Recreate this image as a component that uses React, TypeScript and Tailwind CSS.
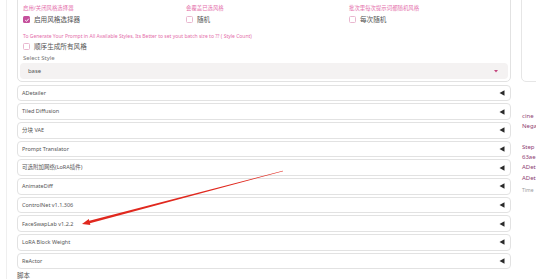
import React from "react";

const FONT = { fontFamily: '"Noto Sans", "Noto Sans CJK SC", sans-serif' };

function Check({ checked }: { checked?: boolean }) {
  if (checked) {
    return (
      <div className="w-[7px] h-[7px] rounded-[1.5px] bg-[#c5509c] flex items-center justify-center shrink-0">
        <svg width="6" height="6" viewBox="0 0 10 10">
          <path d="M2 5.2 L4.2 7.3 L8 2.8" stroke="white" strokeWidth="1.6" fill="none" />
        </svg>
      </div>
    );
  }
  return <div className="w-[7px] h-[7px] rounded-[1.5px] border border-[#e9b7cf] bg-white shrink-0" />;
}

function Opt({ label, text, checked }: { label: string; text: string; checked?: boolean }) {
  return (
    <div className="flex flex-col">
      <div className="h-[8px] leading-[8px] text-[5.4px] text-[#e46eaa] whitespace-nowrap">{label}</div>
      <div className="mt-[2px] h-[11px] flex items-center gap-[4px]">
        <Check checked={checked} />
        <span className="text-[6.6px] text-[#555] whitespace-nowrap">{text}</span>
      </div>
    </div>
  );
}

const rows = [
  "ADetailer",
  "Tiled Diffusion",
  "分块 VAE",
  "Prompt Translator",
  "可选附加网络(LoRA插件)",
  "AnimateDiff",
  "ControlNet v1.1.306",
  "FaceSwapLab v1.2.2",
  "LoRA Block Weight",
  "ReActor",
];

export default function App() {
  return (
    <div className="w-[536px] h-[279px] overflow-hidden bg-white relative flex" style={FONT}>
      <div className="w-[513px] shrink-0 pl-[6px]">
        <div className="h-[300px] border-l border-[#efefef] pl-[10px] flex flex-col">
          <div className="mt-[-10px] w-[494px] border border-[#e2e2e2] rounded-[5px] px-[2px] pt-[13px] pb-[2px] flex flex-col">
            <div className="pl-[3px] grid grid-cols-[163px_163px_1fr]">
              <Opt label="启用/关闭风格选择器" text="启用风格选择器" checked />
              <Opt label="会覆盖已选风格" text="随机" />
              <Opt label="批次里每次提示词都随机风格" text="每次随机" />
            </div>
            <div className="pl-[3px] mt-[7px] h-[8px] leading-[8px] text-[5px] text-[#e46eaa] whitespace-nowrap">
              To Generate Your Prompt in All Available Styles, Its Better to set yout batch size to ?? ( Style Count)
            </div>
            <div className="pl-[3px] mt-[1px] h-[11px] flex items-center gap-[4px]">
              <Check />
              <span className="text-[6.6px] text-[#555]">顺序生成所有风格</span>
            </div>
            <div className="pl-[3px] mt-[2px] h-[8px] leading-[8px] text-[6px] text-[#777]">Select Style</div>
            <div className="mt-[1px] h-[16px] rounded-[4px] bg-[#f4f2f2] flex items-center justify-between pl-[8px] pr-[10px]">
              <span className="text-[5.9px] text-[#555]">base</span>
              <svg width="4" height="3" viewBox="0 0 4 3">
                <path d="M0 0 L4 0 L2 2.5 Z" fill="#c4467e" />
              </svg>
            </div>
          </div>
          <div className="mt-[2.5px] w-[494px] flex flex-col gap-[2px]">
            {rows.map((r) => (
              <div
                key={r}
                className="h-[16.7px] border border-[#e2e2e2] rounded-[4px] flex items-center justify-between pl-[4px] pr-[5px]"
              >
                <span className="text-[5.5px] text-[#555] whitespace-nowrap">{r}</span>
                <svg width="6" height="6" viewBox="0 0 6 6">
                  <path d="M0.5 3 L5.5 0.3 L5.5 5.7 Z" fill="#2a2a2a" />
                </svg>
              </div>
            ))}
          </div>
          <div className="mt-[2.5px] h-[8px] leading-[8px] text-[6.4px] text-[#555]">脚本</div>
        </div>
      </div>
      <div className="flex-1 flex flex-col pl-[8px] overflow-hidden">
        <div className="mt-[-10px] h-[92px] w-[60px] shrink-0 border border-[#e6e6e6] rounded-[5px] bg-white" />
        <div className="mt-[29px] pl-[1px] flex flex-col text-[6px] leading-[10.3px] text-[#8e3d72] whitespace-nowrap">
          <div>cine</div>
          <div>Nega</div>
          <div>&nbsp;</div>
          <div>Step</div>
          <div>63ae</div>
          <div>ADet</div>
          <div>ADet</div>
          <div className="mt-[1.5px] text-[5px] text-[#999]">Time</div>
        </div>
      </div>
      <svg className="absolute left-0 top-0 pointer-events-none" width="536" height="279" viewBox="0 0 536 279">
        <polygon
          points="283.08,171.29 89.9,223.16 90.37,224.9 82,224 88.83,219.1 89.29,220.84 282.92,170.71"
          fill="#e0281e"
        />
      </svg>
    </div>
  );
}
